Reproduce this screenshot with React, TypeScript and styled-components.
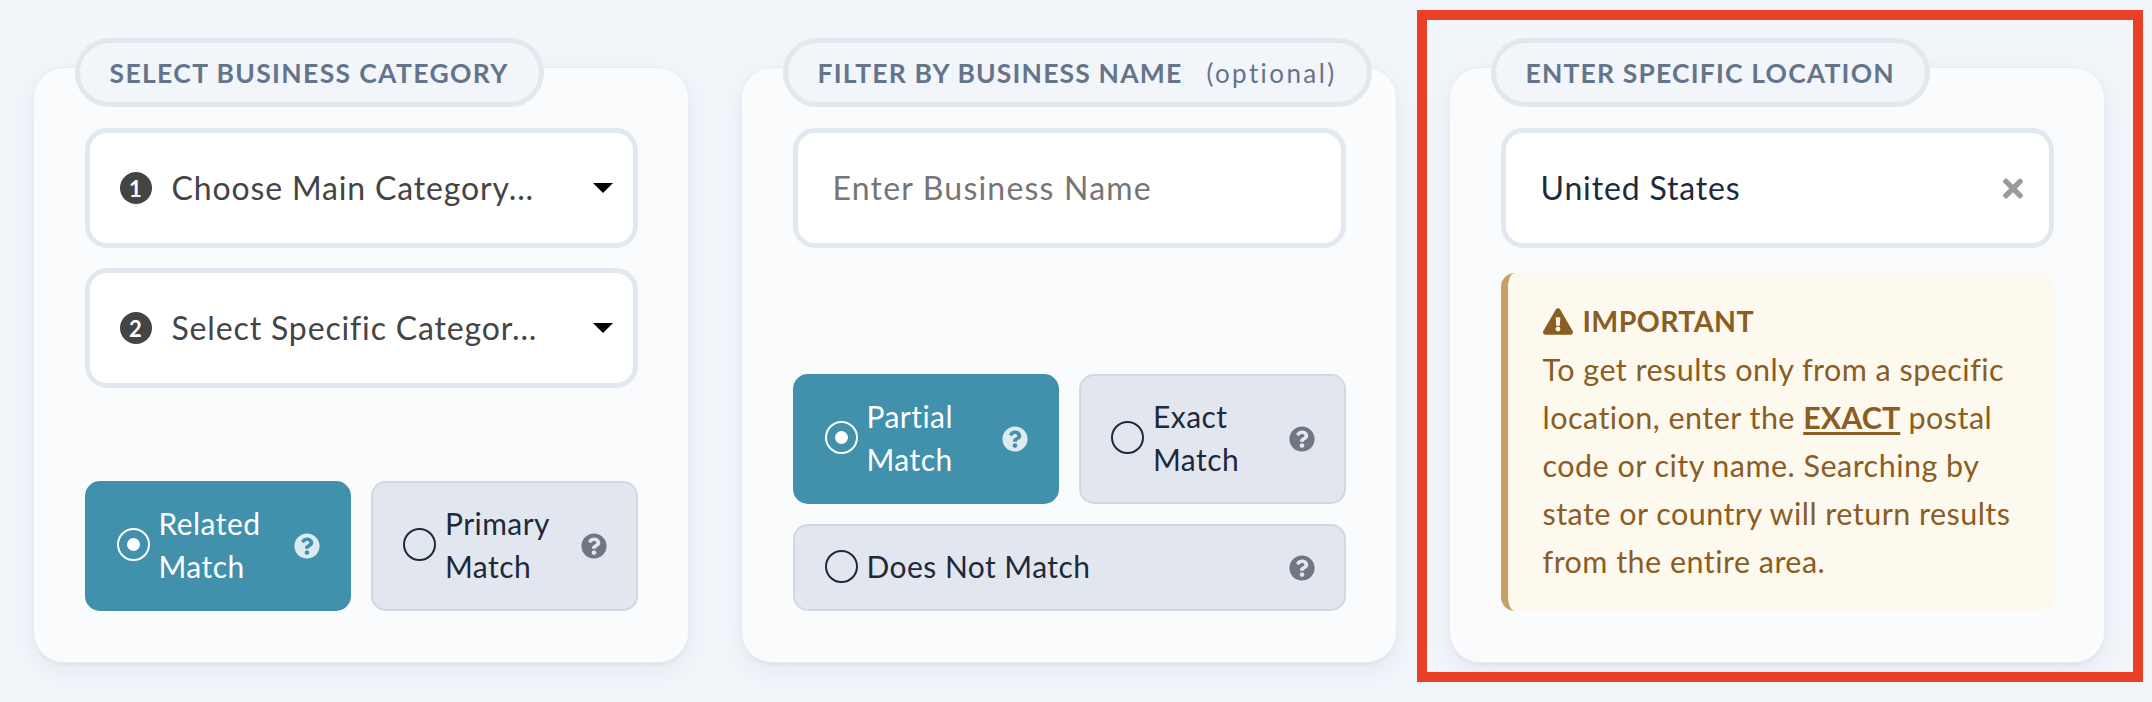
import React from "react";
import styled, { createGlobalStyle } from "styled-components";
import { FaExclamationTriangle, FaQuestionCircle, FaTimes } from "react-icons/fa";

const GlobalStyle = createGlobalStyle`
  html, body {
    margin: 0;
    padding: 0;
    background: #f2f5fa;
    font-family: Lato, "Noto Sans", sans-serif;
  }
  * {
    box-sizing: border-box;
  }
`;

const Page = styled.div`
  position: relative;
  width: 2152px;
  height: 702px;
  overflow: hidden;
  display: flex;
  align-items: flex-start;
  gap: 54px;
  padding: 68px 0 0 34px;
`;

const Annotation = styled.div`
  position: absolute;
  left: 1417px;
  top: 10px;
  width: 726px;
  height: 672px;
  border: 10px solid #ea4126;
  pointer-events: none;
`;

const Card = styled.section`
  width: 654px;
  height: 594px;
  padding: 0 50.5px 51px;
  display: flex;
  flex-direction: column;
  background: #fafbfd;
  border-radius: 30px;
  box-shadow: 0 0 0 1px #e8edf3, 0 3px 3px #dde3ea, 0 8px 24px rgba(148, 163, 184, 0.14);
`;

const Legend = styled.div<{ $tracking?: number }>`
  align-self: flex-start;
  height: 69px;
  margin: -30px 0 21px -10px;
  padding: 0 30px;
  display: flex;
  align-items: center;
  gap: 24px;
  background: #f2f5fa;
  border: 5px solid #e3e8ee;
  border-radius: 35px;
  color: #64748b;
  font-size: 26.5px;
  font-weight: 700;
  letter-spacing: ${(p) => p.$tracking ?? 1.35}px;
  white-space: nowrap;
`;

const Optional = styled.span`
  font-weight: 400;
  font-size: 26px;
  letter-spacing: 2.4px;
`;

const Field = styled.div`
  height: 120px;
  padding: 0 35px;
  display: flex;
  align-items: center;
  background: #fff;
  border: 5px solid #e2e8f0;
  border-radius: 22px;
  & + & {
    margin-top: 20px;
  }
`;

const NumberBadge = styled.span`
  width: 32px;
  height: 32px;
  flex: none;
  margin: 0 20px 0 -5px;
  display: flex;
  align-items: center;
  justify-content: center;
  border-radius: 50%;
  background: #444;
  color: #fff;
  font-size: 22px;
  font-weight: 700;
`;

const SelectText = styled.span`
  flex: 1;
  margin-top: -1px;
  color: #444;
  font-size: 32px;
  letter-spacing: 0.85px;
  white-space: nowrap;
`;

const Caret = styled.svg`
  width: 20px;
  height: 10px;
  flex: none;
  margin-right: -15px;
`;

const TextInput = styled.input`
  width: 100%;
  margin-top: -2px;
  border: 0;
  outline: 0;
  padding: 0;
  background: transparent;
  color: #1e293b;
  font-family: inherit;
  font-size: 32px;
  letter-spacing: 0.85px;
  &::placeholder {
    color: #757575;
    opacity: 1;
    letter-spacing: 1.2px;
  }
`;

const ClearIcon = styled(FaTimes)`
  width: 20px;
  height: 29px;
  flex: none;
  margin-right: -9px;
  color: #9a9a9a;
`;

const Options = styled.div`
  margin-top: auto;
  display: grid;
  grid-template-columns: 1fr 1fr;
  gap: 20px;
`;

const Option = styled.div<{ $active?: boolean; $wide?: boolean }>`
  grid-column: ${(p) => (p.$wide ? "1 / -1" : "auto")};
  height: ${(p) => (p.$wide ? "87px" : "130px")};
  padding: 0 29px 0 30px;
  display: flex;
  align-items: center;
  gap: 9px;
  background: ${(p) => (p.$active ? "#4190ac" : "#e2e7ef")};
  border: 2px solid ${(p) => (p.$active ? "#4190ac" : "#cfd8e3")};
  border-radius: 15px;
  color: ${(p) => (p.$active ? "#fff" : "#1e293b")};
`;

const Radio = styled.span<{ $active?: boolean }>`
  width: 33px;
  height: 33px;
  flex: none;
  margin-top: -3px;
  display: flex;
  align-items: center;
  justify-content: center;
  border: 2px solid currentColor;
  border-radius: 50%;
  &::after {
    content: "";
    display: ${(p) => (p.$active ? "block" : "none")};
    width: 13px;
    height: 13px;
    border-radius: 50%;
    background: #fff;
  }
`;

const OptionLabel = styled.span`
  flex: 1;
  margin-top: -2px;
  font-size: 30px;
  line-height: 43px;
  letter-spacing: 0.45px;
`;

const HelpIcon = styled(FaQuestionCircle)<{ $active?: boolean }>`
  width: 26px;
  height: 26px;
  flex: none;
  color: ${(p) => (p.$active ? "#dcebf0" : "#6f7785")};
`;

const Notice = styled.div`
  margin-top: 25px;
  height: 338px;
  padding: 24px 30px 0 35px;
  background: #fef9ef;
  border-left: 7px solid #c9a063;
  border-radius: 14px;
  color: #8a5d22;
  font-size: 30.5px;
  line-height: 48px;
  letter-spacing: 0.47px;
`;

const NoticeTitle = styled.div`
  display: flex;
  align-items: center;
  gap: 10px;
  font-size: 28.5px;
  font-weight: 700;
  letter-spacing: 0.4px;
`;

const WarnIcon = styled(FaExclamationTriangle)`
  width: 30px;
  height: 27px;
`;

const Strong = styled.strong`
  letter-spacing: 0;
  text-decoration: underline;
  text-underline-offset: 3px;
`;

function OptionItem({ label, active, wide }: { label: React.ReactNode; active?: boolean; wide?: boolean }) {
  return (
    <Option $active={active} $wide={wide}>
      <Radio $active={active} />
      <OptionLabel>{label}</OptionLabel>
      <HelpIcon $active={active} />
    </Option>
  );
}

function SelectField({ num, text }: { num: number; text: string }) {
  return (
    <Field>
      <NumberBadge>{num}</NumberBadge>
      <SelectText>{text}</SelectText>
      <Caret viewBox="0 0 20 10">
        <path d="M0 0h20L10 10z" fill="#000" />
      </Caret>
    </Field>
  );
}

export default function App() {
  return (
    <Page>
      <GlobalStyle />
      <Card>
        <Legend>SELECT BUSINESS CATEGORY</Legend>
        <SelectField num={1} text="Choose Main Category..." />
        <SelectField num={2} text="Select Specific Categor..." />
        <Options>
          <OptionItem active label={<>Related<br />Match</>} />
          <OptionItem label={<>Primary<br />Match</>} />
        </Options>
      </Card>
      <Card>
        <Legend $tracking={1.17}>
          FILTER BY BUSINESS NAME <Optional>(optional)</Optional>
        </Legend>
        <Field>
          <TextInput placeholder="Enter Business Name" />
        </Field>
        <Options>
          <OptionItem active label={<>Partial<br />Match</>} />
          <OptionItem label={<>Exact<br />Match</>} />
          <OptionItem wide label="Does Not Match" />
        </Options>
      </Card>
      <Card>
        <Legend $tracking={1.17}>ENTER SPECIFIC LOCATION</Legend>
        <Field>
          <TextInput defaultValue="United States" />
          <ClearIcon />
        </Field>
        <Notice>
          <NoticeTitle>
            <WarnIcon /> IMPORTANT
          </NoticeTitle>
          To get results only from a specific location, enter the <Strong>EXACT</Strong> postal code or city name. Searching by state or country will return results from the entire area.
        </Notice>
      </Card>
      <Annotation />
    </Page>
  );
}
